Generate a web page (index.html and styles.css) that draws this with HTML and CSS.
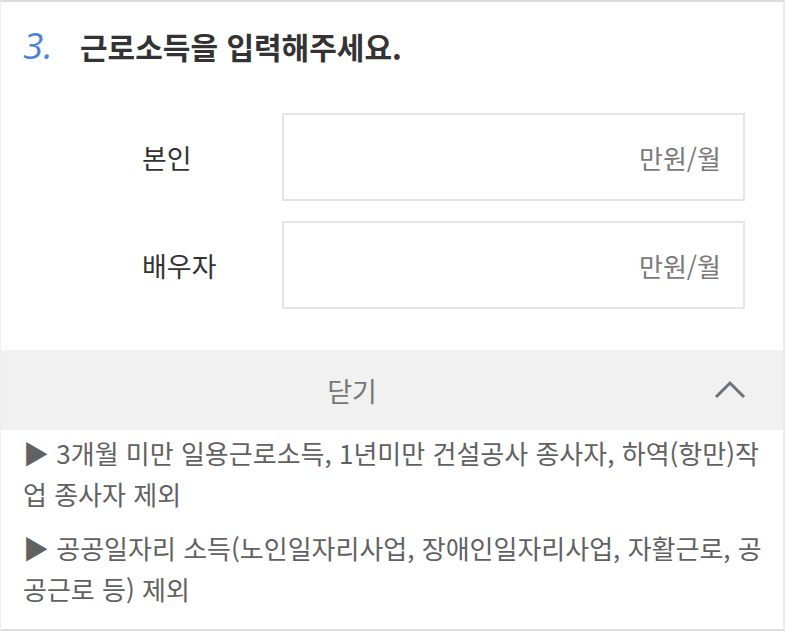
FILE: index.html
```html
<!DOCTYPE html>
<html lang="ko">
<head>
<meta charset="utf-8">
<link rel="stylesheet" href="styles.css">
</head>
<body>
<div class="panel">
  <div class="heading">
    <span class="num">3.</span>
    <h2 class="title">근로소득을 입력해주세요.</h2>
  </div>
  <div class="form">
    <div class="row">
      <label class="label">본인</label>
      <div class="field"><span class="unit">만원/월</span></div>
    </div>
    <div class="row">
      <label class="label">배우자</label>
      <div class="field"><span class="unit">만원/월</span></div>
    </div>
  </div>
  <div class="toggle">
    <span class="toggle-text">닫기</span>
    <svg class="chev" width="34" height="20" viewBox="0 0 34 20"><path d="M3 17 L17 3 L31 17" fill="none" stroke="#6b7380" stroke-width="3"/></svg>
  </div>
  <div class="notes">
    <p class="note">▶ 3개월 미만 일용근로소득, 1년미만 건설공사 종사자, 하역(항만)작업 종사자 제외</p>
    <p class="note">▶ 공공일자리 소득(노인일자리사업, 장애인일자리사업, 자활근로, 공공근로 등) 제외</p>
  </div>
</div>
</body>
</html>
```

FILE: styles.css
```css
html, body {
  margin: 0;
  padding: 0;
  background: #fff;
}
body {
  width: 785px;
  height: 631px;
  overflow: hidden;
  font-family: "Noto Sans CJK KR", "Noto Sans", sans-serif;
}
.panel {
  box-sizing: border-box;
  width: 785px;
  height: 631px;
  border-top: 2px solid #dcdcdc;
  border-left: 1px solid #efefef;
  border-right: 2px solid #ececec;
  border-bottom: 2px solid #dcdcdc;
  display: flex;
  flex-direction: column;
}
.heading {
  display: flex;
  align-items: center;
  height: 88px;
  padding-left: 22px;
  box-sizing: border-box;
  margin-bottom: 23px;
}
.num {
  font-family: "Open Sans", "Noto Sans", sans-serif;
  font-style: italic;
  font-weight: 400;
  font-size: 37px;
  color: #4a84d8;
  width: 57px;
  line-height: 1;
  margin-top: -4px;
}
.title {
  margin: 0;
  font-size: 30px;
  font-weight: 700;
  color: #333;
}
.form {
  display: flex;
  flex-direction: column;
  gap: 20px;
  padding-left: 141px;
}
.row {
  display: flex;
  align-items: center;
}
.label {
  width: 140px;
  font-size: 27px;
  color: #333;
}
.field {
  box-sizing: border-box;
  width: 463px;
  height: 88px;
  border: 2px solid #e4e4e4;
  display: flex;
  align-items: center;
  justify-content: flex-end;
  padding-right: 22px;
}
.unit {
  font-size: 26px;
  color: #7a7a7a;
}
.toggle {
  margin-top: 41px;
  height: 80px;
  background: #f1f1f1;
  display: grid;
  grid-template-columns: 1fr 80px;
  align-items: center;
}
.toggle-text {
  text-align: center;
  font-size: 27px;
  color: #777;
}
.chev {
  margin-left: 10px;
}
.notes {
  padding: 2px 20px 0 22px;
}
.note {
  margin: 0 0 13px;
  font-size: 26px;
  line-height: 41px;
  color: #616161;
  word-break: break-all;
}
```
